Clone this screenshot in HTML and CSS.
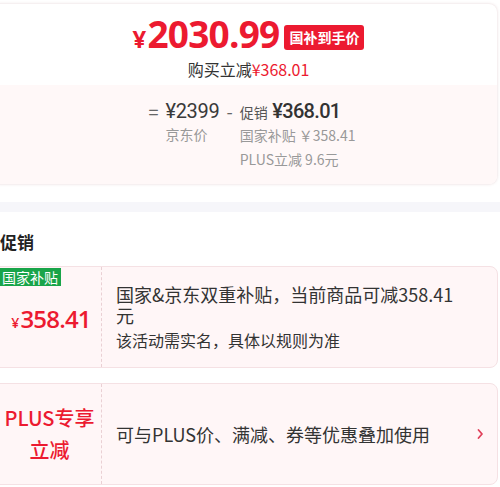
FILE: index.html
```html
<!DOCTYPE html>
<html lang="zh-CN">
<head>
  <meta charset="UTF-8" />
  <meta name="viewport" content="width=device-width, initial-scale=1.0"/>
  <title>价格详情</title>
  <link rel="stylesheet" href="styles.css">
</head>
<body>
  <div class="price-card">
    <div class="price-top">
      <div class="final-row">
        <span class="final-price"><span class="yen">¥</span>2030.99</span>
        <span class="final-tag">国补到手价</span>
      </div>
      <div class="saved">购买立减<span class="saved-num">¥368.01</span></div>
    </div>
    <div class="price-detail">
      <span class="op">=</span>
      <div class="col">
        <div class="num">¥2399</div>
        <div class="sub">京东价</div>
      </div>
      <span class="op">-</span>
      <div class="col">
        <div class="num"><span class="promo-label">促销</span> <span class="num-strong">¥368.01</span></div>
        <div class="sub">国家补贴 ￥358.41</div>
        <div class="sub">PLUS立减 9.6元</div>
      </div>
    </div>
  </div>

  <div class="divider"></div>

  <h2 class="section-title">促销</h2>

  <div class="promo-card">
    <div class="promo-left">
      <span class="green-tag">国家补贴</span>
      <span class="promo-amount"><span class="yen-small">¥</span>358.41</span>
    </div>
    <div class="promo-right">
      <div class="promo-text">国家&amp;京东双重补贴，当前商品可减358.41元</div>
      <div class="promo-note">该活动需实名，具体以规则为准</div>
    </div>
  </div>

  <div class="promo-card">
    <div class="promo-left">
      <span class="plus-title">PLUS专享<br>立减</span>
    </div>
    <div class="promo-right row">
      <div class="promo-text">可与PLUS价、满减、券等优惠叠加使用</div>
      <svg class="chevron" width="10" height="14" viewBox="0 0 10 14">
        <path d="M3.5 3 L7 7 L3.5 11" fill="none" stroke="#e0405a" stroke-width="1.8" stroke-linecap="round" stroke-linejoin="round"/>
      </svg>
    </div>
  </div>
</body>
</html>
```

FILE: styles.css
```css
body {
  margin: 0;
  background: #fff;
  font-family: "Noto Sans CJK SC", "Noto Sans", sans-serif;
  color: #333;
}

.price-card {
  margin: 4px 3px 0 -8px;
  border-radius: 8px;
  background: #fff;
  box-shadow: 0 0 3px rgba(200, 160, 165, 0.45);
  overflow: hidden;
}

.price-top {
  height: 81px;
  display: flex;
  flex-direction: column;
  align-items: center;
  padding-left: 8px;
}

.final-row {
  display: flex;
  align-items: center;
  gap: 5px;
  margin-top: 12px;
  height: 40px;
}

.final-price {
  font-family: "Open Sans", "Noto Sans", sans-serif;
  font-size: 37px;
  font-weight: 700;
  color: #ec1a30;
  letter-spacing: -0.8px;
  line-height: 40px;
}

.yen {
  font-size: 24px;
  margin-right: 2px;
}

.final-tag {
  background: #ec1a30;
  color: #fff;
  font-size: 14px;
  font-weight: 700;
  padding: 0 5px;
  height: 25px;
  line-height: 25px;
  border-radius: 3px;
  margin-top: 2px;
}

.saved {
  font-size: 16px;
  color: #333;
  line-height: 22px;
  margin-top: 2px;
}

.saved-num {
  color: #ec1a30;
}

.price-detail {
  background: #fff8f8;
  height: 99px;
  display: flex;
  justify-content: center;
  align-items: flex-start;
  padding-left: 8px;
  box-sizing: border-box;
}

.op {
  font-size: 18px;
  color: #666;
  line-height: 26px;
  margin-top: 13px;
  padding: 0 7px;
}

.col {
  display: flex;
  flex-direction: column;
  margin-top: 13px;
}

.num {
  font-family: Roboto, "Noto Sans CJK SC", sans-serif;
  font-size: 20px;
  color: #3a3a3a;
  line-height: 26px;
  letter-spacing: -0.3px;
}

.num-strong {
  font-weight: 500;
  color: #333;
  letter-spacing: -0.7px;
}

.promo-label {
  font-family: "Noto Sans CJK SC", sans-serif;
  font-size: 14px;
  color: #555;
  letter-spacing: 0;
}

.sub {
  font-size: 14px;
  color: #999;
  line-height: 24px;
}

.sub:nth-child(2) {
  margin-top: -2px;
}

.divider {
  height: 10px;
  background: #f6f6fa;
  margin-top: 18px;
}

.section-title {
  margin: 19px 0 0 0;
  font-size: 17px;
  font-weight: 700;
  color: #222;
  line-height: 22px;
}

.promo-card {
  margin: 13px 2px 15px -8px;
  height: 102px;
  box-sizing: border-box;
  border: 1px solid #f5e1e4;
  border-radius: 8px;
  background: #fff6f7;
  display: flex;
}

.promo-card + .promo-card {
  margin-top: 0;
}

.promo-left {
  position: relative;
  width: 108px;
  flex-shrink: 0;
  border-right: 1px dashed #ead0d4;
  display: flex;
  align-items: center;
  justify-content: center;
}

.green-tag {
  position: absolute;
  left: 7px;
  top: 1px;
  background: #19a449;
  color: #fff;
  font-size: 14px;
  line-height: 18px;
  padding: 0 3px 0 2px;
}

.promo-amount {
  font-family: "Open Sans", "Noto Sans", sans-serif;
  font-size: 24px;
  font-weight: 600;
  color: #ec1a30;
  letter-spacing: -0.8px;
  padding-left: 8px;
  margin-top: 2px;
}

.yen-small {
  font-size: 14px;
  margin-right: 2px;
}

.plus-title {
  color: #ec1a30;
  font-size: 20px;
  font-weight: 500;
  text-align: center;
  line-height: 32px;
  padding-left: 5px;
}

.promo-right {
  flex: 1;
  padding: 0 38px 0 14px;
  display: flex;
  flex-direction: column;
  justify-content: center;
}

.promo-right.row {
  flex-direction: row;
  align-items: center;
  justify-content: space-between;
  padding-right: 12px;
}

.promo-text {
  font-size: 18px;
  color: #333;
  line-height: 21px;
}

.promo-note {
  font-size: 16px;
  color: #333;
  line-height: 20px;
  margin-top: 4px;
}

.chevron {
  flex-shrink: 0;
}
```
